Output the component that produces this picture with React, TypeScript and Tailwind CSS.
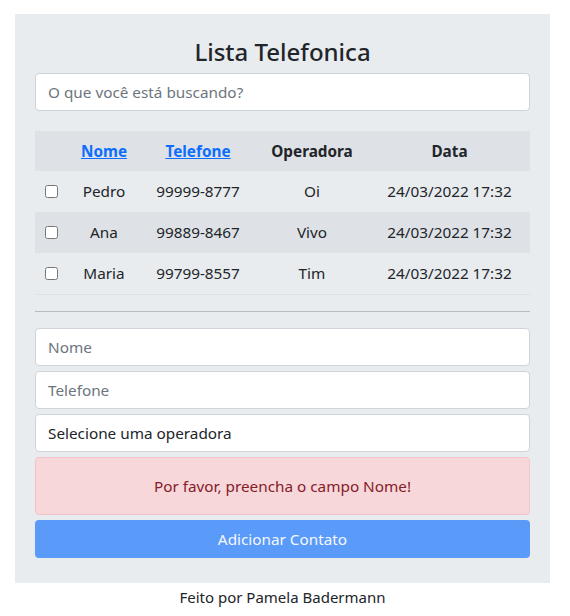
import { useState } from 'react';

const contatos = [
  { nome: 'Pedro', telefone: '99999-8777', operadora: 'Oi', data: '24/03/2022 17:32' },
  { nome: 'Ana', telefone: '99889-8467', operadora: 'Vivo', data: '24/03/2022 17:32' },
  { nome: 'Maria', telefone: '99799-8557', operadora: 'Tim', data: '24/03/2022 17:32' },
];

const cols = 'grid grid-cols-[32px_74px_114px_114px_161px] items-center text-center';

export default function App() {
  const [busca, setBusca] = useState('');

  return (
    <div className="min-h-[616px] bg-white font-['Noto_Sans',sans-serif] text-[15.3px] text-[#212529]">
      <div className="pt-[14px] px-[15px]">
        <div className="w-[535px] bg-[#e9ecef] px-[20px] pt-[23px] pb-[25px]">
          <h1 className="text-center text-[24px] font-medium leading-[30px] mb-[6px]">Lista Telefonica</h1>

          {/* Busca */}
          <input
            type="text"
            value={busca}
            onChange={(e) => setBusca(e.target.value)}
            placeholder="O que você está buscando?"
            className="w-full h-[38px] px-3 bg-white border border-[#ced4da] rounded-[4px] placeholder:text-[#6c757d] outline-none"
          />

          {/* Tabela */}
          <div className="mt-[20px] border-b border-[#dee2e6]">
            <div className={`${cols} h-[40px] bg-[#dee2e6] font-bold`}>
              <span />
              <a href="#" className="text-[#0d6efd] underline">Nome</a>
              <a href="#" className="text-[#0d6efd] underline">Telefone</a>
              <span>Operadora</span>
              <span>Data</span>
            </div>
            {contatos.map((c, i) => (
              <div key={c.nome} className={`${cols} h-[41px] ${i % 2 === 1 ? 'bg-[#dee2e6]' : ''}`}>
                <span className="flex justify-center pl-[1px]">
                  <input type="checkbox" className="w-[13px] h-[13px]" />
                </span>
                <span>{c.nome}</span>
                <span>{c.telefone}</span>
                <span>{c.operadora}</span>
                <span>{c.data}</span>
              </div>
            ))}
          </div>

          <hr className="mt-[16px] mb-[16px] border-t border-[#b9bcbf]" />

          {/* Formulário */}
          <div className="flex flex-col gap-[5px]">
            <input
              type="text"
              placeholder="Nome"
              className="w-full h-[38px] px-3 bg-white border border-[#ced4da] rounded-[4px] placeholder:text-[#6c757d] outline-none"
            />
            <input
              type="text"
              placeholder="Telefone"
              className="w-full h-[38px] px-3 bg-white border border-[#ced4da] rounded-[4px] placeholder:text-[#6c757d] outline-none"
            />
            <div className="w-full h-[38px] px-3 flex items-center bg-white border border-[#ced4da] rounded-[4px]">
              Selecione uma operadora
            </div>
            <div className="h-[58px] flex items-center justify-center bg-[#f8d7da] border border-[#f5c2c7] rounded-[4px] text-[#842029]">
              Por favor, preencha o campo Nome!
            </div>
            <button className="h-[38px] w-full bg-[#5a9af8] text-[#f4f8ff] rounded-[4px] text-[15.3px]">
              Adicionar Contato
            </button>
          </div>
        </div>
        <p className="w-[535px] text-center text-[15px] mt-[3px]">Feito por Pamela Badermann</p>
      </div>
    </div>
  );
}
